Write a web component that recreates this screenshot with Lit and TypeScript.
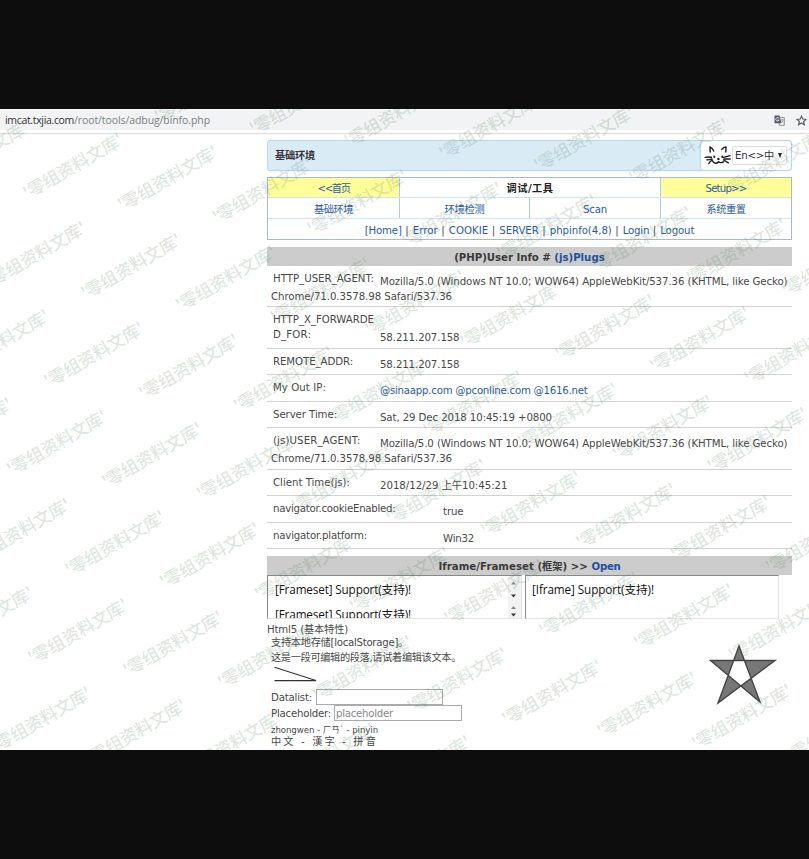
import { LitElement, html, svg, css, nothing } from "lit";
import { customElement, property } from "lit/decorators.js";

/** A run of text spaced evenly to a set width. */
@customElement("fit-text")
class FitText extends LitElement {
  @property({ type: Number }) w = 0;
  static styles = css`
    :host { display: inline-block; white-space: pre; }
  `;
  render() { return html`<slot></slot>`; }
  firstUpdated() {
    const n = [...(this.textContent ?? "")].length;
    const natural = this.getBoundingClientRect().width;
    if (this.w && n) this.style.letterSpacing = `${(this.w - natural) / n}px`;
  }
}

interface Info { label: any; value: any; more?: any; h: number; wide?: boolean; low?: boolean }
const t = (w: number, s: string) => html`<fit-text w=${w}>${s}</fit-text>`;
const a = (w: number, s: string) => html`<a><fit-text w=${w}>${s}</fit-text></a>`;
const UA = "Mozilla/5.0 (Windows NT 10.0; WOW64) AppleWebKit/537.36 (KHTML, like Gecko)";
const UA2 = "Chrome/71.0.3578.98 Safari/537.36";

const rows: Info[] = [
  { label: t(101, "HTTP_USER_AGENT:"), value: t(407.5, UA), more: t(181, UA2), h: 41 },
  { label: html`${t(101, "HTTP_X_FORWARDE")}<br>${t(38, "D_FOR:")}`, value: t(79.5, "58.211.207.158"), h: 42, low: true },
  { label: t(80, "REMOTE_ADDR:"), value: t(79.5, "58.211.207.158"), h: 26 },
  { label: t(53, "My Out IP:"), value: a(207.5, "@sinaapp.com @pconline.com @1616.net"), h: 27 },
  { label: t(64, "Server Time:"), value: t(172, "Sat, 29 Dec 2018 10:45:19 +0800"), h: 26 },
  { label: t(87.5, "(js)USER_AGENT:"), value: t(407.5, UA), more: t(181, UA2), h: 42 },
  { label: t(77, "Client Time(js):"), value: t(127.5, "2018/12/29 上午10:45:21"), h: 26 },
  { label: t(122.5, "navigator.cookieEnabled:"), value: t(20.5, "true"), h: 27, wide: true },
  { label: t(94, "navigator.platform:"), value: t(31, "Win32"), h: 26, wide: true },
];

const marks: { x: number; y: number }[] = [];
for (let r = -3; r < 9; r++)
  for (let c = -3; c < 14; c++) {
    const x = 73 + c * 94.8 - r * 36.9;
    const y = 166 + c * 12.2 + r * 88.2;
    if (x > -45 && x < 850 && y > 85 && y < 775) marks.push({ x, y: y - 109 });
  }

@customElement("app-root")
class AppRoot extends LitElement {
  static styles = css`
    :host { display: block; width: 809px; height: 859px; background: #0d0d0d; overflow: hidden; }
    * { box-sizing: border-box; }
    .page {
      position: relative; margin-top: 109px; height: 641px; background: #fff; overflow: hidden;
      font: 10.2px/15px "DejaVu Sans", "Noto Sans CJK SC", sans-serif; color: #484848;
    }
    :host::before { content: ""; display: table; }
    a { color: #2c5aa5; }
    .bar {
      height: 25px; border-top: 1px solid #fafafa; border-bottom: 1px solid #dcdcdc; background: #f1f3f4;
      box-shadow: inset 0 -3px #fff; display: flex; align-items: center; padding: 0 2px 3px 5px;
      font-family: "Open Sans", "Noto Sans", sans-serif; font-size: 10.5px; color: #7c7f82;
    }
    .host { color: #333; }
    .icons { margin-left: auto; display: flex; align-items: center; gap: 11px; }
    svg { display: block; }
    .main { width: 525px; margin-left: 267px; }
    .panel {
      margin-top: 6px; height: 31px; background: #d9ecf6; border: 1px solid #b5d8f3; border-radius: 3px;
      display: flex; align-items: center; padding-left: 7px; font-weight: bold; color: #3a3038;
    }
    .lang {
      margin: -1px -1px -1px auto; width: 92px; height: 31px; background: #fff; border: 1px solid #b5d4f3;
      border-radius: 4px; display: flex; align-items: center; padding-left: 3px; font-weight: normal; color: #333;
    }
    .select {
      width: 55px; height: 19px; border: 1px solid #ddd; border-radius: 2px;
      display: flex; align-items: center; padding-left: 2px;
    }
    .caret { margin-left: 4px; border: 2.5px solid transparent; border-top: 5px solid #222; border-bottom: 0; }
    .nav { margin-top: 6px; height: 63px; border: 1px solid #a9b9c8; display: grid; grid-template-rows: 20px 21px 20px; }
    .tr { display: grid; grid-template-columns: 131px 261px 1fr; border-bottom: 1px solid #cfe3f7; }
    .tr.four { grid-template-columns: 131px 130px 131px 1fr; }
    .tr.all { grid-template-columns: 1fr; border: 0; }
    .td { display: flex; align-items: center; justify-content: center; border-left: 1px solid #a9cbee; padding-top: 2px; }
    .td:first-child { border: 0; }
    .td.y { background: #ffff99; }
    .td.b { font-weight: bold; color: #222; }
    .head {
      height: 19px; background: #ccc; display: flex; justify-content: center; align-items: center;
      font-weight: bold; color: #3a3a3a; white-space: pre; padding-top: 1px;
    }
    .head.first { margin-top: 7px; }
    .head.second { margin-top: 7px; }
    .head a { color: #24509c; }
    .info { border-bottom: 1px solid #d2d2d2; padding-left: 4px; overflow: hidden; }
    .info.h41 { height: 41px; } .info.h42 { height: 42px; } .info.h26 { height: 26px; } .info.h27 { height: 27px; }
    .line { display: flex; padding-left: 2px; height: 23px; }
    .label { width: 107px; flex: none; padding-top: 4.6px; white-space: nowrap; }
    .wide .label { width: 170px; }
    .val { padding-top: 8px; white-space: nowrap; }
    .low .line { height: 38px; }
    .low .val { align-self: flex-end; }
    .frames { display: flex; gap: 3px; height: 44px; }
    .frame {
      height: 44px; border: 1px solid #e4e4e4; border-top: 1px solid #888; border-left: 1px solid #888;
      overflow: hidden; display: flex; justify-content: space-between; color: #111;
      font: 11.7px/25px "Open Sans", "Noto Sans CJK SC", sans-serif;
    }
    .f1 { width: 255px; } .f2 { width: 254px; }
    .doc { padding: 1px 0 0 7px; }
    .doc.d2 { padding-left: 6px; }
    .scroll { width: 13px; background: #f2f2f2; }
    .html5 { padding-top: 3px; }
    .ind { padding-left: 4px; }
    .l1 { height: 13px; } .l2 { height: 15px; } .l3 { height: 16px; }
    .draw { height: 23px; }
    .field { display: flex; height: 16px; align-items: center; }
    .box { height: 16px; border: 1px solid #aaa; background: #fff; padding-left: 1px; color: #888; line-height: 15px; }
    .bd { width: 127px; margin-left: 4px; } .bp { width: 128px; margin-left: 3px; }
    .ruby { font-size: 8.6px; line-height: 13px; height: 14px; padding-top: 3px; }
    .han { line-height: 13px; }
    .star { position: absolute; left: 705px; top: 531px; }
    .marks { position: absolute; left: 0; top: 0; pointer-events: none; }
    .marks text { font: 500 17.4px "Noto Sans CJK SC", sans-serif; fill: rgb(80, 125, 90); fill-opacity: 0.2; }
  `;

  arrow(y: number, up: boolean) {
    return up
      ? svg`<path d="M3 ${y + 2.5}L5.5 ${y - 0.5}L8 ${y + 2.5}Z" fill="#888"/>`
      : svg`<path d="M3 ${y}L5.5 ${y + 3}L8 ${y}Z" fill="#333"/>`;
  }

  render() {
    const bar = () => t(11, " | ");
    return html`<div class="page">
      <div class="bar">
        <span class="host">${t(69, "imcat.txjia.com")}</span>${t(136, "/root/tools/adbug/binfo.php")}
        <div class="icons">
          <svg width="11" height="11" viewBox="0 0 11 11">
            <path d="M4.5 2.5H10.3V10.3H5.5Z" fill="#f6f6f6" stroke="#777" stroke-width=".8"/>
            <path d="M0.5 0.5H5.5L7.5 8.2H0.5Z" fill="#555d66"/>
            <path d="M5 3.4A1.7 1.7 0 1 0 5.1 5H3.5" fill="none" stroke="#fff" stroke-width=".8"/>
            <path d="M6.8 4.8H9.6M8.2 4V4.8M9.2 4.8Q8.6 7 7.3 7.8M7.4 5.6Q8.2 7 9.5 7.8" fill="none" stroke="#777" stroke-width=".6"/>
          </svg>
          <svg width="11" height="11" viewBox="0 0 11 11">
            <path d="M5.5 1L6.8 4.1L10.1 4.4L7.6 6.5L8.4 9.8L5.5 8L2.6 9.8L3.4 6.5L.9 4.4L4.2 4.1Z" fill="none" stroke="#555a60" stroke-width="1.1"/>
          </svg>
        </div>
      </div>
      <div class="main">
        <div class="panel">${t(40, "基础环境")}
          <div class="lang">
            <svg width="28" height="22" viewBox="0 0 28 22" fill="none" stroke="#1c1c1c" stroke-width="1.4" stroke-linecap="round" stroke-linejoin="round">
              <path d="M6.2 7L6 2Q8.5 3 9.8 6M17.8 4.4Q19.5 2.2 22 2L21.8 7M1.2 12.4Q4 11.6 7.4 12.2M3 14.8Q5 15.2 7.8 13.8M4.8 18.6Q5.5 16.6 8.4 15M8.6 16Q9.5 18.4 12 18.2Q14 18 14.6 16.6Q16 18.6 19.5 16.8M19.5 12.4L26 10.6M20 14L26.2 14M19.5 15L24.3 17.8"/>
              <path d="M10.3 11.5V12M18.2 11.5V12M14 14H14.8" stroke-width="1.8"/>
            </svg>
            <div class="select">${t(39, "En<>中")}<span class="caret"></span></div>
          </div>
        </div>
        <div class="nav">
          <div class="tr"><div class="td y">${a(32, "<<首页")}</div><div class="td b">${t(47, "调试/工具")}</div><div class="td y">${a(41, "Setup>>")}</div></div>
          <div class="tr four"><div class="td">${a(39, "基础环境")}</div><div class="td">${a(40, "环境检测")}</div><div class="td">${a(24, "Scan")}</div><div class="td">${a(39, "系统重置")}</div></div>
          <div class="tr all"><div class="td">${a(37, "[Home]")}${bar()}${a(25, "Error")}${bar()}${a(39.5, "COOKIE")}${bar()}${a(39.5, "SERVER")}${bar()}${a(62, "phpinfo(4,8)")}${bar()}${a(26.5, "Login")}${bar()}${a(34, "Logout")}</div></div>
        </div>
        <div class="head first">${t(100, "(PHP)User Info # ")}${a(50.5, "(js)Plugs")}</div>
        ${rows.map((r) => html`<div class="info h${r.h} ${r.wide ? "wide" : ""} ${r.low ? "low" : ""}">
          <div class="line"><div class="label">${r.label}</div><div class="val">${r.value}</div></div>
          ${r.more ?? nothing}
        </div>`)}
        <div class="head second">${t(153, "Iframe/Frameset (框架) >> ")}${a(29, "Open")}</div>
        <div class="frames">
          <div class="frame f1">
            <div class="doc">${t(136, "[Frameset] Support(支持)!")}<br>${t(136, "[Frameset] Support(支持)!")}</div>
            <div class="scroll"><svg width="13" height="42">${this.arrow(6, true)}${this.arrow(18.5, false)}${this.arrow(30.5, true)}${this.arrow(37.5, false)}</svg></div>
          </div>
          <div class="frame f2"><div class="doc d2">${t(122, "[Iframe] Support(支持)!")}</div></div>
        </div>
        <div class="html5">
          <div class="l1">${t(81, "Html5 (基本特性)")}</div>
          <div class="ind l2">${t(137, "支持本地存储[localStorage]。")}</div>
          <div class="ind l3">${t(190, "这是一段可编辑的段落,请试着编辑该文本。")}</div>
          <div class="draw"><svg width="60" height="20" fill="none" stroke="#333" stroke-width="1.1"><path d="M7.5 1.2L49 14.6H7.5"/></svg></div>
          <div class="ind field">${t(41, "Datalist:")}<div class="box bd"></div></div>
          <div class="ind field">${t(60, "Placeholder:")}<div class="box bp">${t(57, "placeholder")}</div></div>
          <div class="ind ruby">${t(107, "zhongwen - ㄏㄢˋ - pinyin")}</div>
          <div class="ind han">${t(107, "中文 - 漢字 - 拼音")}</div>
        </div>
      </div>
      <svg class="star" width="75" height="68"><path d="M34 6L55 62L5.5 20.5H70L13 63Z" fill="#777" fill-rule="evenodd" stroke="#444" stroke-width="1.4"/></svg>
      <svg class="marks" width="809" height="641">
        ${marks.map((m) => svg`<text text-anchor="middle" textLength="112" transform="translate(${m.x} ${m.y}) rotate(-30)" y="6.5">'零组资料文库'</text>`)}
      </svg>
    </div>`;
  }
}
